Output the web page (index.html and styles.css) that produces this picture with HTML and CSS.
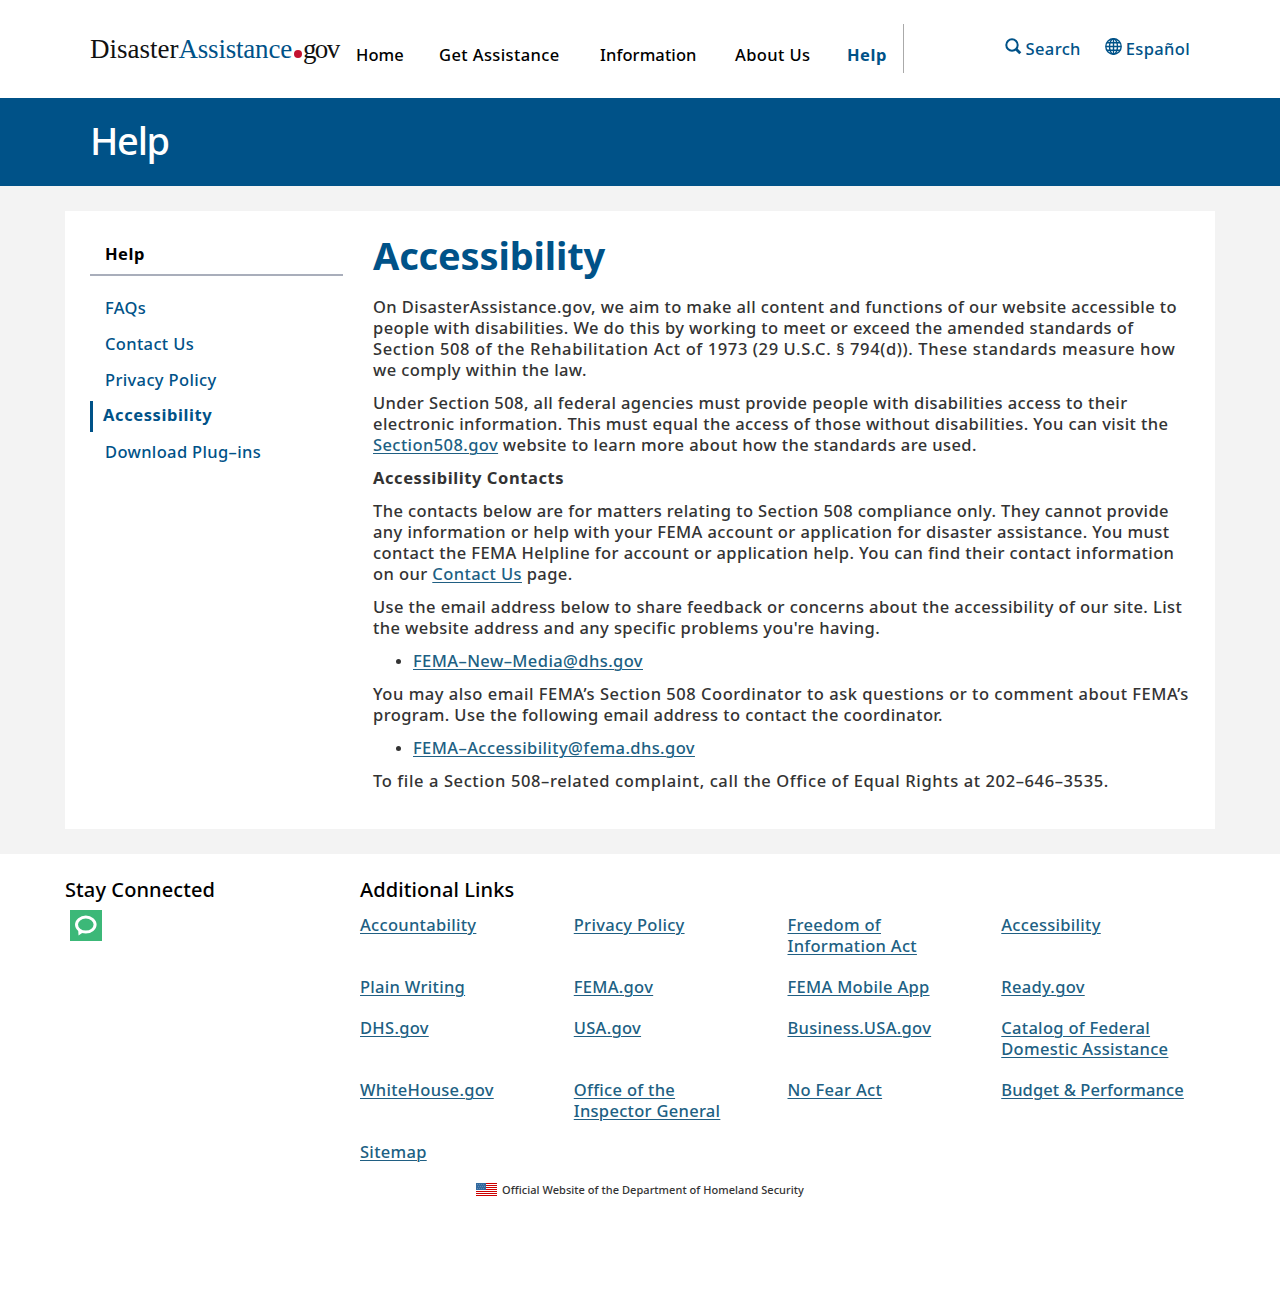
FILE: index.html
```html
<!DOCTYPE html>
<html lang="en">
<head>
<meta charset="utf-8">
<title>Accessibility | DisasterAssistance.gov</title>
<link rel="stylesheet" href="styles.css">
</head>
<body>
<header class="site-header">
  <a class="logo"><span>Disaster</span><span class="logo-blue">Assistance</span><i class="logo-dot"></i><span class="logo-gov">gov</span></a>
  <nav class="main-nav">
    <a class="nav-home">Home</a>
    <a class="nav-get">Get Assistance</a>
    <a class="nav-info">Information</a>
    <a class="nav-about">About Us</a>
    <a class="nav-help">Help</a>
  </nav>
  <div class="tools">
    <a class="tool"><svg width="17" height="17" viewBox="0 0 17 17" fill="none" stroke="currentColor"><circle cx="7" cy="7" r="5.7" stroke-width="2"/><path d="M11 11l4.3 4.3" stroke-width="2.8"/></svg><span>Search</span></a>
    <a class="tool"><svg width="17" height="17" viewBox="0 0 17 17" fill="none" stroke="currentColor" stroke-width="1.4"><circle cx="8.5" cy="8.5" r="7.7"/><ellipse cx="8.5" cy="8.5" rx="4" ry="7.7"/><path d="M8.5 1v15M1 8.5h15M2 4.7h13M2 12.3h13"/></svg><span>Español</span></a>
  </div>
</header>
<div class="banner">Help</div>
<div class="page">
  <main class="card">
    <aside class="sidebar">
      <h2 class="side-title">Help</h2>
      <ul class="side-list">
        <li><a>FAQs</a></li>
        <li><a>Contact Us</a></li>
        <li><a>Privacy Policy</a></li>
        <li class="active"><a>Accessibility</a></li>
        <li><a>Download Plug–ins</a></li>
      </ul>
    </aside>
    <article class="content">
      <h1>Accessibility</h1>
      <p>On DisasterAssistance.gov, we aim to make all content and functions of our website accessible to<br>people with disabilities. We do this by working to meet or exceed the amended standards of<br><span class="wide">Section 508 of the Rehabilitation Act of 1973 (29 U.S.C. § 794(d)). These standards measure how</span><br>we comply within the law.</p>
      <p>Under Section 508, all federal agencies must provide people with disabilities access to their<br>electronic information. This must equal the access of those without disabilities. You can visit the<br><a class="link">Section508.gov</a> website to learn more about how the standards are used.</p>
      <h3>Accessibility Contacts</h3>
      <p>The contacts below are for matters relating to Section 508 compliance only. They cannot provide<br>any information or help with your FEMA account or application for disaster assistance. You must<br>contact the FEMA Helpline for account or application help. You can find their contact information<br>on our <a class="link">Contact Us</a> page.</p>
      <p>Use the email address below to share feedback or concerns about the accessibility of our site. List<br>the website address and any specific problems you're having.</p>
      <ul class="mail"><li><a class="link">FEMA–New–Media@dhs.gov</a></li></ul>
      <p><span class="semiwide">You may also email FEMA’s Section 508 Coordinator to ask questions or to comment about FEMA’s</span><br>program. Use the following email address to contact the coordinator.</p>
      <ul class="mail"><li><a class="link">FEMA–Accessibility@fema.dhs.gov</a></li></ul>
      <p class="wide">To file a Section 508–related complaint, call the Office of Equal Rights at 202–646–3535.</p>
    </article>
  </main>
</div>
<footer class="footer">
  <section class="social">
    <h2>Stay Connected</h2>
    <svg class="chat" width="32" height="31" viewBox="0 0 32 31"><path fill="#3cb878" d="M0 0h32v31H0z"/><ellipse cx="15.8" cy="14.6" rx="9.3" ry="7.5" fill="none" stroke="#fff" stroke-width="3"/><path d="M8.2 19l.3 6.5 5.5-3.8z" fill="#fff"/></svg>
  </section>
  <section class="more">
    <h2>Additional Links</h2>
    <div class="links">
      <a class="link">Accountability</a><a class="link">Privacy Policy</a><a class="link">Freedom of<br>Information Act</a><a class="link">Accessibility</a>
      <a class="link">Plain Writing</a><a class="link">FEMA.gov</a><a class="link">FEMA Mobile App</a><a class="link">Ready.gov</a>
      <a class="link">DHS.gov</a><a class="link">USA.gov</a><a class="link">Business.USA.gov</a><a class="link">Catalog of Federal<br>Domestic Assistance</a>
      <a class="link">WhiteHouse.gov</a><a class="link">Office of the<br>Inspector General</a><a class="link">No Fear Act</a><a class="link snug">Budget &amp; Performance</a>
      <a class="link">Sitemap</a>
    </div>
  </section>
</footer>
<div class="official">
  <svg width="21" height="13" viewBox="0 0 21 13" shape-rendering="crispEdges"><path fill="#fff" d="M0 0h21v13H0z"/><path stroke="#c00" d="M0 .5h21M0 2.5h21M0 4.5h21M0 6.5h21M0 8.5h21M0 10.5h21M0 12.5h21"/><path fill="#336a9f" d="M0 0h10v7H0z"/><path stroke="#6189b3" stroke-dasharray="1 1" d="M1 1.5h8M2 3.5h7M1 5.5h8"/></svg>
  <span>Official Website of the Department of Homeland Security</span>
</div>
</body>
</html>
```
FILE: styles.css
```css
* { box-sizing: border-box; }
body {
  margin: 0;
  background: #fff;
  color: #333;
  font: 500 16.5px/21px "Noto Sans", "Open Sans", sans-serif;
  letter-spacing: 0.41px;
}
h1, h2, h3, p, ul { margin: 0; padding: 0; }
ul { list-style: none; }
.site-header { height: 98px; padding: 0 90px; display: flex; align-items: flex-start; }
.logo {
  width: 266px; padding-top: 35px; display: flex; align-items: baseline;
  font: 27px/28px "Liberation Serif", serif; letter-spacing: 0; color: #111; white-space: nowrap;
}
.logo-blue { color: #005288; letter-spacing: -0.2px; }
.logo-gov { letter-spacing: -1.6px; }
.logo-dot { width: 8px; height: 8px; border-radius: 50%; background: #c41230; margin: 0 1px 0 2px; }
.main-nav {
  width: 548px; height: 49px; margin-top: 24px; padding-top: 20px; display: flex;
  border-right: 1px solid #aaa; color: #000; white-space: nowrap; letter-spacing: 0.1px;
}
.nav-home { flex: 0 0 83px; }
.nav-get { flex: 0 0 161px; letter-spacing: 0.4px; }
.nav-info { flex: 0 0 135px; letter-spacing: 0.1px; }
.nav-about { flex: 0 0 112px; letter-spacing: 0.4px; }
.nav-help { color: #005288; font-weight: 700; letter-spacing: 0.5px; }
.tools { margin-left: auto; padding-top: 38px; display: flex; gap: 24px; color: #005288; letter-spacing: 0.35px; }
.tool { display: flex; gap: 4px; }
.banner {
  height: 88px; padding: 18px 90px; background: #005288; color: #fff;
  font-size: 38px; line-height: 48px; letter-spacing: -1.3px;
}
.page { background: #f3f3f3; padding: 25px 65px; }
.card { height: 618px; background: #fff; padding: 25px; display: flex; }
.sidebar { width: 253px; margin-right: 30px; letter-spacing: 0.35px; }
.side-title {
  height: 40px; padding: 7px 15px; border-bottom: 2px solid #a9aebb;
  color: #000; font-size: 16.5px; line-height: 21px; letter-spacing: 0.5px;
}
.side-list { padding-top: 17px; color: #005288; }
.side-list li { height: 31px; padding: 4px 15px; margin-bottom: 5px; }
.side-list .active { border-left: 3px solid #005288; padding: 3px 10px; font-weight: 700; letter-spacing: 0.6px; }
.content { white-space: nowrap; }
h1 { color: #005288; font-size: 38px; line-height: 42px; letter-spacing: -0.15px; margin: -2px 0 20px; }
p, h3, .mail { margin-bottom: 12px; }
h3 { font-size: 16.5px; line-height: 21px; letter-spacing: 0.57px; }
.wide { letter-spacing: 0.61px; }
.semiwide { letter-spacing: 0.53px; }
.link { color: #205f83; text-decoration: underline; text-underline-offset: 2px; text-decoration-thickness: 1px; }
.mail { padding-left: 40px; list-style: disc; }
.mail li::marker { font-size: 14px; }
.footer { padding: 25px 65px 0; display: flex; }
.footer h2 { color: #000; font-size: 20px; font-weight: 500; line-height: 21px; letter-spacing: 0.1px; }
.social { width: 295px; }
.chat { display: block; margin: 10px 0 0 5px; }
.more { flex: 1; }
.links {
  margin-top: 14px; display: grid; grid-template-columns: repeat(4, 1fr); gap: 20px 0;
  justify-items: start; align-items: start; letter-spacing: 0.3px;
}
.links .snug { letter-spacing: 0.1px; }
.official {
  margin-top: 17px; display: flex; justify-content: center; align-items: center; gap: 5px;
  font-size: 11px; line-height: 21px; letter-spacing: 0.05px;
}
```
